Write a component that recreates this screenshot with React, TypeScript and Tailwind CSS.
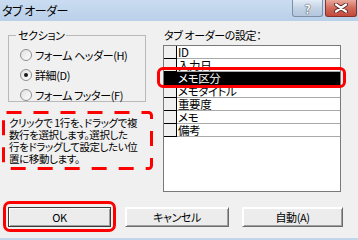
import React from "react";

const ROWS = ["ID", "入力日", "メモ区分", "メモタイトル", "重要度", "メモ", "備考"];
const SELECTED = 2;

function Radio({ checked, label }: { checked?: boolean; label: string }) {
  return (
    <div className="flex h-[20px] items-center">
      <span className="ml-[11px] flex h-[12px] w-[12px] items-center justify-center rounded-full border border-[#8e8f8f] bg-gradient-to-br from-[#e0e0e0] to-[#ffffff]">
        {checked && <span className="h-[4px] w-[4px] rounded-full bg-[#1a1a1a]" />}
      </span>
      <span className="ml-[3px] whitespace-nowrap">{label}</span>
    </div>
  );
}

function WinButton({ label, width, isDefault }: { label: string; width: string; isDefault?: boolean }) {
  return (
    <button
      type="button"
      className={`flex h-[20px] ${width} items-center justify-center border ${
        isDefault ? "border-[#3c3c3c]" : "border-t-white border-l-white border-r-[#6b6b6b] border-b-[#6b6b6b]"
      } bg-[#ececec] shadow-[inset_1px_1px_0_#ffffff,inset_-1px_-1px_0_#a0a0a0] text-[11px] leading-[12px] tracking-[-0.4px] text-black`}
    >
      {label}
    </button>
  );
}

export default function App() {
  return (
    <div className="flex h-[240px] w-[358px] flex-col overflow-hidden bg-[#f0f0f0] font-['Noto_Sans_CJK_JP','Noto_Sans',sans-serif] text-[11px] leading-[12px] tracking-[-0.4px] text-black [font-feature-settings:'palt']">
      {/* Title bar */}
      <div className="flex h-[21px] shrink-0 items-start bg-gradient-to-b from-[#cadcf0] to-[#b9d0e9]">
        <span className="ml-[2px] mt-[4px] text-[12px] leading-[13px] tracking-[-0.5px] text-black">タブ オーダー</span>
        <div className="ml-auto flex">
          <div className="flex h-[17px] w-[31px] items-center justify-center rounded-b-[3px] border border-t-0 border-[#7d8fa7] bg-gradient-to-b from-[#e3ecf6] via-[#c3d3e6] to-[#b3c6dd]">
            <span className="text-[12px] font-bold leading-[13px] text-white [text-shadow:0_0_1px_#333,0_0_1px_#333]">?</span>
          </div>
          <div className="ml-[2px] mr-[1px] flex h-[17px] w-[32px] items-center justify-center rounded-b-[3px] border border-t-0 border-[#8a2f27] bg-gradient-to-b from-[#e9a99c] via-[#d26a5a] to-[#c24a3c]">
            <svg width="16" height="10" viewBox="0 0 16 10">
              <path d="M3 1.5 L13 8.5 M13 1.5 L3 8.5" stroke="#5a2a26" strokeWidth="4" strokeLinecap="round" />
              <path d="M3 1.5 L13 8.5 M13 1.5 L3 8.5" stroke="#ffffff" strokeWidth="2.2" strokeLinecap="round" />
            </svg>
          </div>
        </div>
      </div>

      {/* Body */}
      <div className="flex flex-1 flex-col">
        <div className="flex">
          {/* Left column */}
          <div className="ml-[8px] flex w-[138px] flex-col">
            <div className="mt-[14px] h-[67px] border border-[#b9b9b9]">
              <div className="-mt-[7px] ml-[7px] w-fit bg-[#f0f0f0] px-[2px] leading-[13px]">セクション</div>
              <div className="mt-[3px] flex flex-col">
                <Radio label="フォーム ヘッダー(H)" />
                <Radio checked label="詳細(D)" />
                <Radio label="フォーム フッター(F)" />
              </div>
            </div>

            <div className="relative -ml-[6px] mt-[9px] h-[59px] w-[151px]">
              <div className="whitespace-nowrap pl-[7px] pt-[6px] text-[10.5px] leading-[12px]">
                クリックで 1行を、ドラッグで複
                <br />
                数行を選択します。選択した
                <br />
                行をドラッグして設定したい位
                <br />
                置に移動します。
              </div>
              <svg className="absolute inset-0" width="151" height="59" viewBox="0 0 151 59">
                <rect x="1.5" y="1.5" width="148" height="56" rx="3" fill="none" stroke="#ff0000" strokeWidth="3" strokeDasharray="15 12" />
              </svg>
            </div>
          </div>

          {/* Right column */}
          <div className="ml-[17px] flex w-[178px] flex-col">
            <div className="ml-[1px] mt-[8px] whitespace-nowrap leading-[13px]">タブ オーダーの設定：</div>
            <div className="relative mt-[3px]">
              <div className="h-[147px] border border-[#7a7a7a] bg-white">
                {ROWS.map((r, i) => {
                  const sel = i === SELECTED;
                  return (
                    <div key={r} className="flex h-[13px]">
                      <span className={`w-[13px] shrink-0 border-r border-b border-black ${sel ? "bg-black" : "bg-[#f0f0f0]"}`} />
                      <span
                        className={`flex-1 border-b pl-[1px] text-[11.5px] leading-[12px] ${
                          sel ? "border-black bg-black text-white" : "border-[#a9a9a9]"
                        }`}
                      >
                        {r}
                      </span>
                    </div>
                  );
                })}
              </div>
              <div className="absolute -left-[6px] -right-[5px] top-[22px] h-[21px] rounded-[6px] border-[3px] border-[#ff0000]" />
            </div>
          </div>
        </div>

        {/* Buttons */}
        <div className="mt-[15px] flex">
          <div className="relative ml-[8px]">
            <WinButton label="OK" width="w-[103px]" isDefault />
            <div className="absolute -left-[5px] -right-[5px] -top-[6px] -bottom-[5px] rounded-[7px] border-[3px] border-[#ff0000]" />
          </div>
          <div className="ml-[14px]">
            <WinButton label="キャンセル" width="w-[104px]" />
          </div>
          <div className="ml-[13px]">
            <WinButton label="自動(A)" width="w-[101px]" />
          </div>
        </div>
      </div>

      <div className="h-[2px] shrink-0 bg-[#c3d5ea]" />
    </div>
  );
}
